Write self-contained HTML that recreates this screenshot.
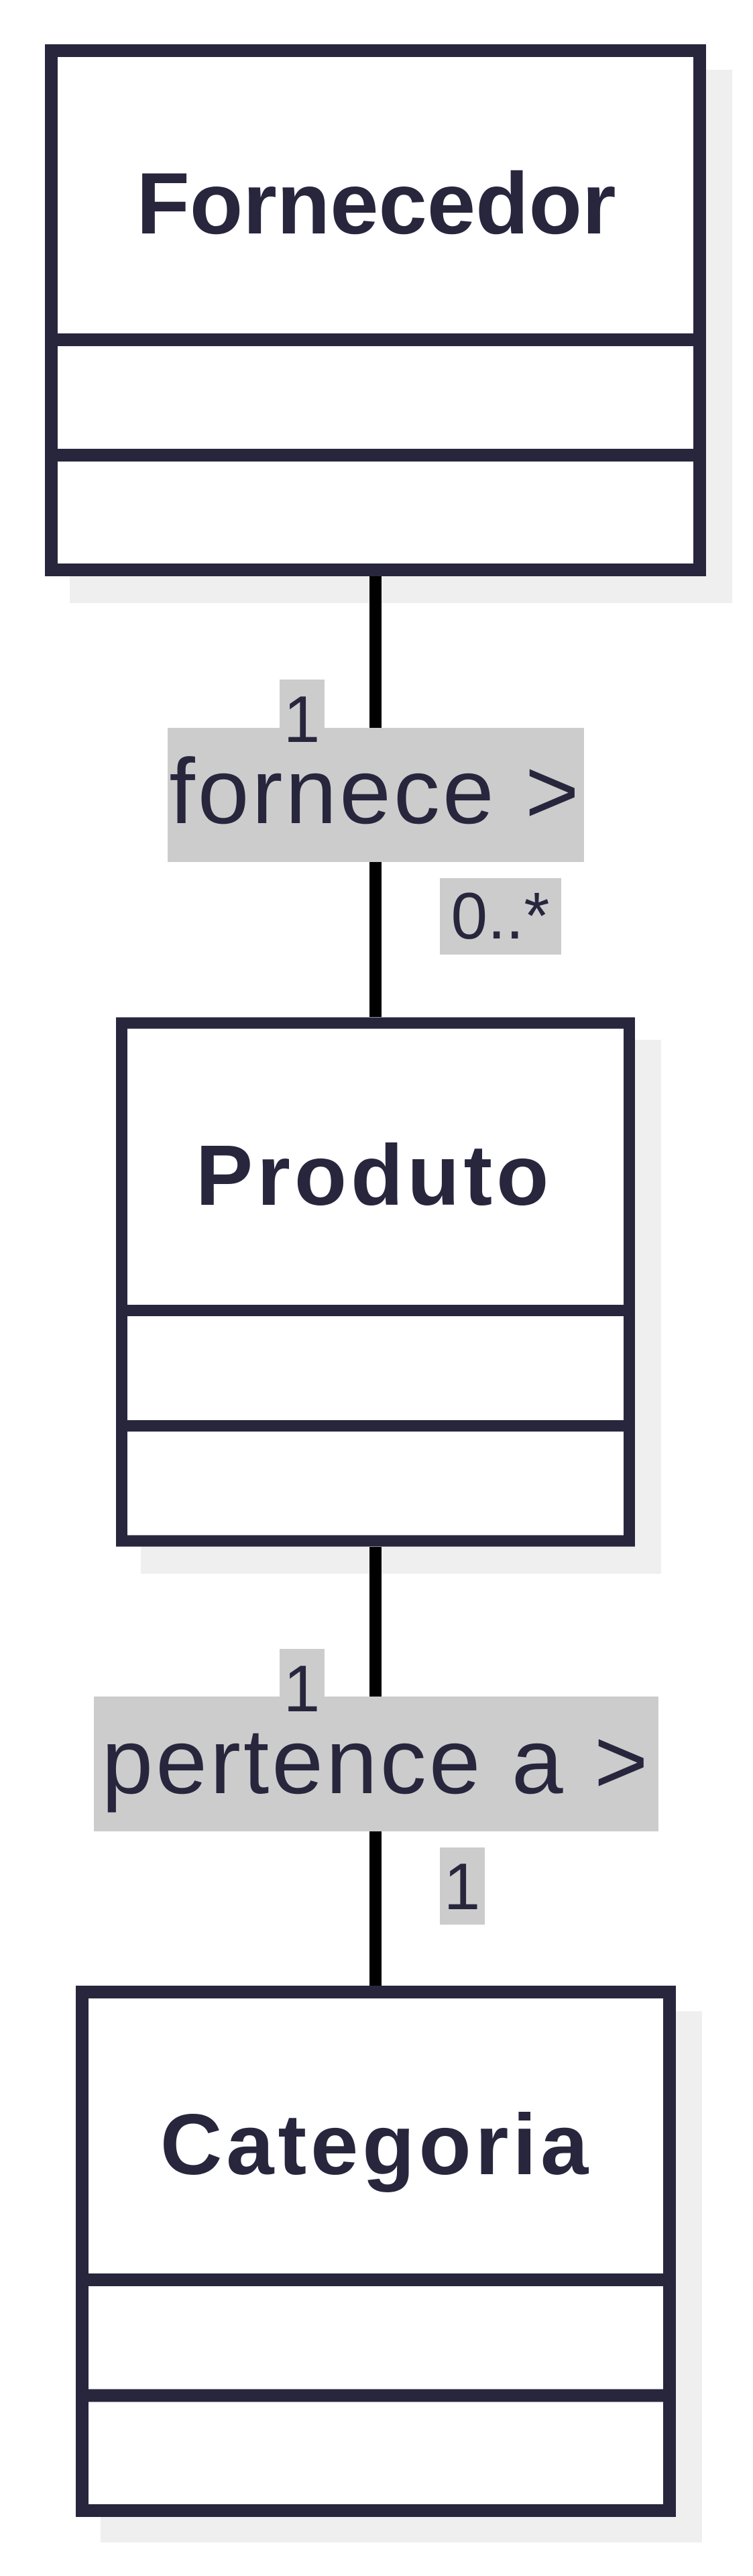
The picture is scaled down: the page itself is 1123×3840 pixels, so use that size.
<!DOCTYPE html>
<html><head><meta charset="utf-8"><style>html,body{margin:0;padding:0;background:#fff}svg{display:block}</style></head><body>
<svg width="1123" height="3840" viewBox="0 0 1123 3840" xmlns="http://www.w3.org/2000/svg">
<g fill="#efefef">
<rect x="104" y="104" width="988" height="795"/>
<rect x="210" y="1550" width="776" height="796"/>
<rect x="150" y="2998" width="897" height="792"/>
</g>
<g stroke="#000" stroke-width="18">
<line x1="560" y1="859" x2="560" y2="1516"/>
<line x1="560" y1="2306" x2="560" y2="2960"/>
</g>
<g fill="#fff" stroke="#28263d" stroke-width="19">
<rect x="76.5" y="75.5" width="967" height="774"/>
<line x1="76" y1="506.5" x2="1044" y2="506.5"/>
<line x1="76" y1="678.5" x2="1044" y2="678.5"/>
<rect x="181.5" y="1525" width="757" height="772" stroke-width="17"/>
<line x1="181" y1="1953.5" x2="939" y2="1953.5" stroke-width="17"/>
<line x1="181" y1="2125.5" x2="939" y2="2125.5" stroke-width="17"/>
<rect x="122.5" y="2969.5" width="876" height="773"/>
<line x1="122" y1="3398.5" x2="999" y2="3398.5"/>
<line x1="122" y1="3571" x2="999" y2="3571"/>
</g>
<g fill="#cccccc">
<rect x="417" y="1013" width="67" height="72"/>
<rect x="250" y="1085" width="621" height="200"/>
<rect x="656" y="1309" width="181" height="114"/>
<rect x="417" y="2458" width="67" height="71"/>
<rect x="140" y="2529" width="842" height="201"/>
<rect x="656" y="2754" width="67" height="115"/>
</g>
<g fill="#28263d" font-family="Liberation Sans, sans-serif" text-anchor="middle">
<text x="561" y="348" font-size="130" font-weight="bold">Fornecedor</text>
<text x="558" y="1796" font-size="128" font-weight="bold" letter-spacing="6">Produto</text>
<text x="561" y="3241" font-size="128" font-weight="bold" letter-spacing="6">Categoria</text>
<text x="450" y="1106" font-size="98">1</text>
<text x="560" y="1227" font-size="138" letter-spacing="4">fornece &gt;</text>
<text x="746" y="1399" font-size="98">0..*</text>
<text x="450" y="2551" font-size="98">1</text>
<text x="561" y="2673" font-size="138" letter-spacing="4">pertence a &gt;</text>
<text x="689" y="2846" font-size="98">1</text>
</g>
</svg>
</body></html>
